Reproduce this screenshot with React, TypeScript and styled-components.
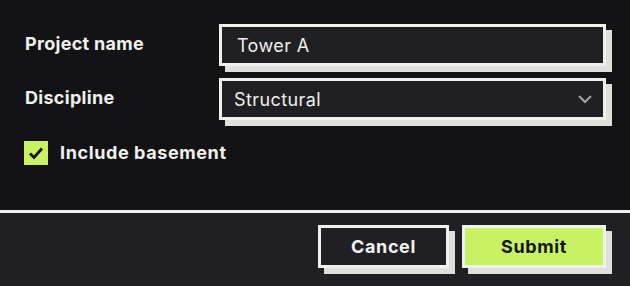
import React from "react";
import styled, { createGlobalStyle } from "styled-components";

const Global = createGlobalStyle`
  html, body { margin: 0; padding: 0; background: #131316; }
  body { font-family: "Inter", "Liberation Sans", sans-serif; color: #f0f0ec; }
  * { box-sizing: border-box; }
`;

const Dialog = styled.div`
  width: 630px;
  height: 286px;
  display: flex;
  flex-direction: column;
  background: #131316;
`;

const Body = styled.div`
  padding: 24px 24px 0 24px;
  height: 210px;
  display: flex;
  flex-direction: column;
`;

const FieldGrid = styled.div`
  display: grid;
  grid-template-columns: 195px 1fr;
  row-gap: 12px;
  align-items: center;
`;

const Label = styled.label`
  font-size: 18px;
  font-weight: 700;
  letter-spacing: 0.3px;
  color: #f0f0ec;
  padding-left: 1px;
  margin-top: -4px;
`;

const FieldBox = styled.div<{ $pad: number }>`
  position: relative;
  height: 42px;
  background: #1f1f24;
  border: 3px solid #f0f0ec;
  box-shadow: 6px 6px 0 #dfdfdb;
  display: flex;
  align-items: center;
  padding: 0 10px 0 ${(p) => p.$pad}px;
`;

const FieldText = styled.span`
  font-size: 18px;
  font-weight: 400;
  letter-spacing: 0.4px;
  color: #f0f0ec;
  flex: 1;
`;

const CheckRow = styled.div`
  display: flex;
  align-items: center;
  gap: 12px;
  margin-top: 21px;
`;

const CheckBox = styled.span`
  width: 24px;
  height: 24px;
  background: #c8f264;
  display: flex;
  align-items: center;
  justify-content: center;
`;

const CheckLabel = styled.span`
  font-size: 18px;
  font-weight: 700;
  letter-spacing: 0.6px;
  color: #f0f0ec;
  margin-top: -1px;
`;

const Footer = styled.div`
  flex: 1;
  background: #1f1f24;
  border-top: 3px solid #f0f0ec;
  display: flex;
  justify-content: flex-end;
  align-items: flex-start;
  gap: 13px;
  padding: 12px 24px 0 0;
`;

const Button = styled.button<{ $primary?: boolean; $w: number }>`
  width: ${(p) => p.$w}px;
  height: 43px;
  border: 3px solid #f0f0ec;
  background: ${(p) => (p.$primary ? "#c8f264" : "#1f1f24")};
  color: ${(p) => (p.$primary ? "#16161a" : "#f0f0ec")};
  box-shadow: 6px 6px 0 #dfdfdb;
  font-family: "Inter", "Liberation Sans", sans-serif;
  font-size: 18px;
  font-weight: 700;
  letter-spacing: 0.6px;
  padding: 0;
  cursor: pointer;
`;

export default function App() {
  return (
    <>
      <Global />
      <Dialog>
        <Body>
          <FieldGrid>
            <Label>Project name</Label>
            <FieldBox $pad={15}>
              <FieldText>Tower A</FieldText>
            </FieldBox>
            <Label>Discipline</Label>
            <FieldBox $pad={12}>
              <FieldText>Structural</FieldText>
              <svg width="16" height="10" viewBox="0 0 16 10" fill="none">
                <path d="M2 2 L8 8 L14 2" stroke="#a3a3ab" strokeWidth="2" />
              </svg>
            </FieldBox>
          </FieldGrid>
          <CheckRow>
            <CheckBox>
              <svg width="18" height="18" viewBox="0 0 18 18" fill="none">
                <path d="M3 9.5 L7 13.5 L15 4.5" stroke="#16161a" strokeWidth="2.8" />
              </svg>
            </CheckBox>
            <CheckLabel>Include basement</CheckLabel>
          </CheckRow>
        </Body>
        <Footer>
          <Button $w={131}>Cancel</Button>
          <Button $primary $w={144}>Submit</Button>
        </Footer>
      </Dialog>
    </>
  );
}
